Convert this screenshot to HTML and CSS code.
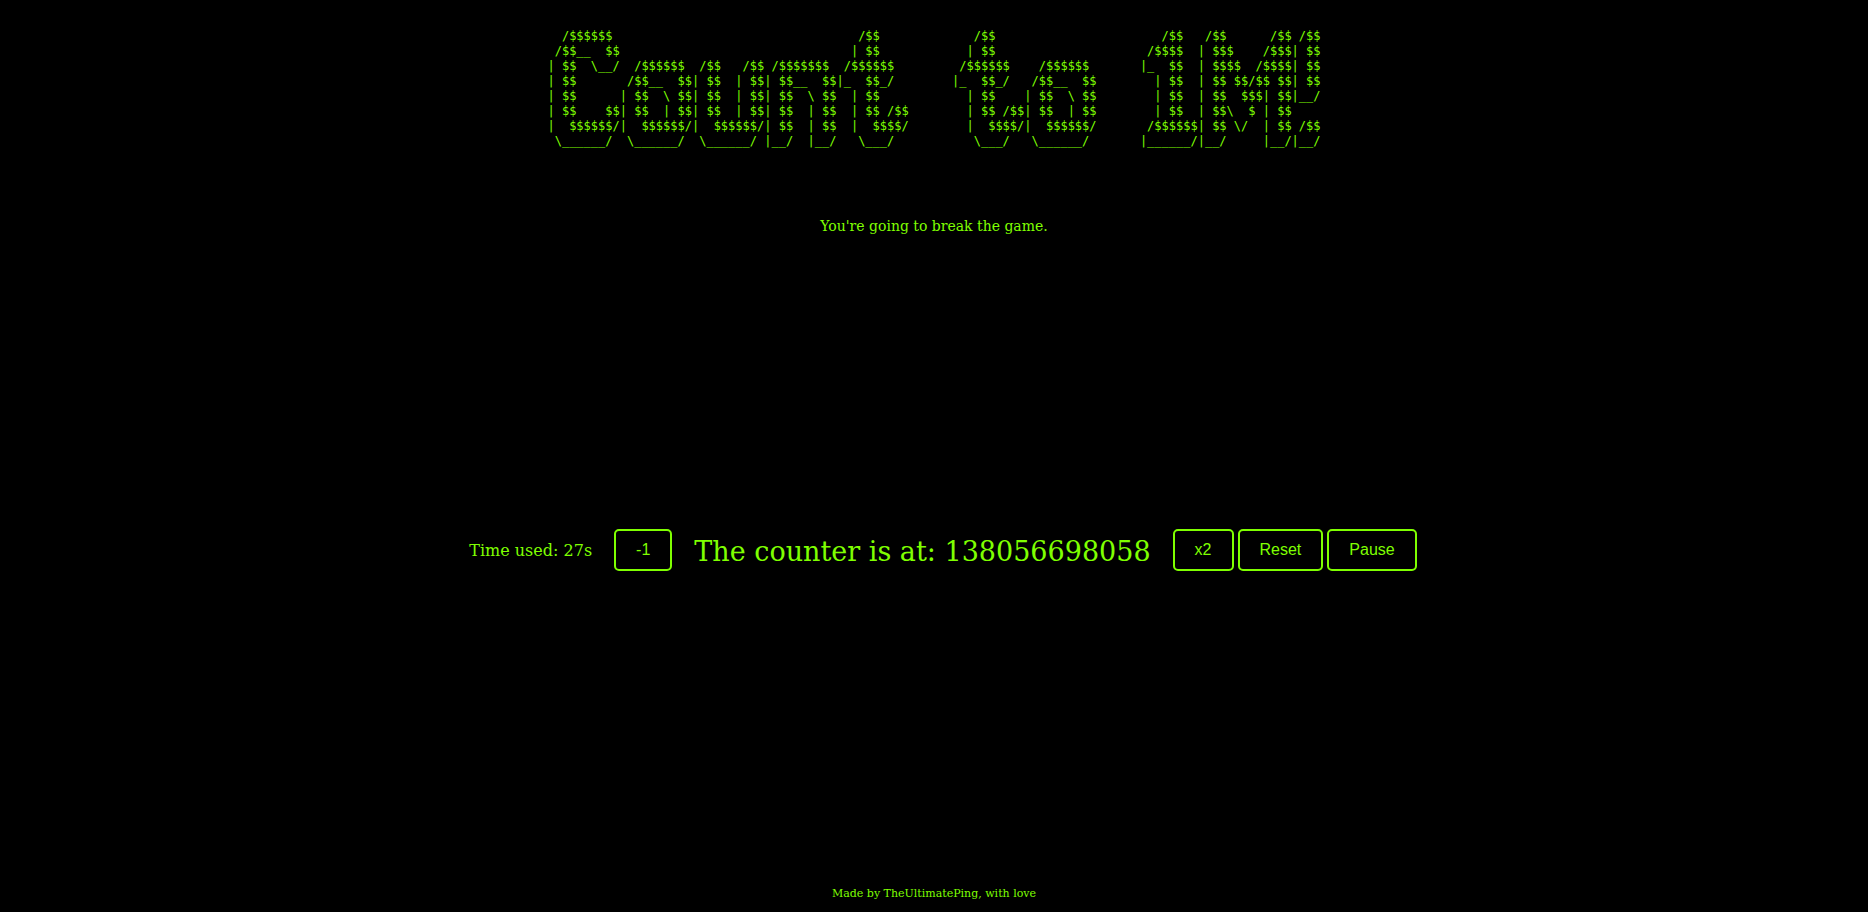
FILE: index.html
```html
<!DOCTYPE html>
<html lang="en">
  <head>
    <meta charset="UTF-8" />
    <meta name="viewport" content="width=device-width, initial-scale=1.0" />
    <title>Count to 1M!</title>
    <link rel="stylesheet" href="styles.css">
  </head>
  <body>
    <header>
      <pre class="title">
  /$$$$$$                                  /$$             /$$                       /$$   /$$      /$$ /$$
 /$$__  $$                                | $$            | $$                     /$$$$  | $$$    /$$$| $$
| $$  \__/  /$$$$$$  /$$   /$$ /$$$$$$$  /$$$$$$         /$$$$$$    /$$$$$$       |_  $$  | $$$$  /$$$$| $$
| $$       /$$__  $$| $$  | $$| $$__  $$|_  $$_/        |_  $$_/   /$$__  $$        | $$  | $$ $$/$$ $$| $$
| $$      | $$  \ $$| $$  | $$| $$  \ $$  | $$            | $$    | $$  \ $$        | $$  | $$  $$$| $$|__/
| $$    $$| $$  | $$| $$  | $$| $$  | $$  | $$ /$$        | $$ /$$| $$  | $$        | $$  | $$\  $ | $$    
|  $$$$$$/|  $$$$$$/|  $$$$$$/| $$  | $$  |  $$$$/        |  $$$$/|  $$$$$$/       /$$$$$$| $$ \/  | $$ /$$
 \______/  \______/  \______/ |__/  |__/   \___/           \___/   \______/       |______/|__/     |__/|__/
</pre>
      <p class="message">You're going to break the game.</p>
    </header>

    <main class="game">
      <span class="time">Time used: <span id="time">27</span>s</span>
      <button type="button" id="minus">-1</button>
      <span class="counter">The counter is at: <span id="count">138056698058</span></span>
      <div class="actions">
        <button type="button" id="double">x2</button>
        <button type="button" id="reset">Reset</button>
        <button type="button" id="pause">Pause</button>
      </div>
    </main>

    <footer>Made by TheUltimatePing, with love</footer>
  </body>
</html>
```
FILE: styles.css
```css
* {
  box-sizing: border-box;
}
body {
  display: grid;
  grid-template-rows: 3fr auto 2fr;
  min-height: 100vh;
  margin: 0;
  background-color: #000;
  color: #7fff00;
  font-family: "DejaVu Serif", serif;
  text-align: center;
}
header {
  padding-top: 29px;
}
.title {
  display: inline-block;
  margin: 0;
  font-family: "DejaVu Sans Mono", monospace;
  font-size: 12px;
  line-height: 15px;
  text-align: left;
}
.message {
  margin: 67px 0 0;
  font-size: 14px;
  line-height: 20px;
}
.game {
  display: flex;
  justify-content: center;
  align-items: center;
  margin-top: 18px;
  padding: 0 12px 0 30px;
}
.time {
  margin-right: 22px;
  font-size: 16px;
}
.counter {
  margin: 0 22px;
  padding-top: 2px;
  font-size: 27px;
}
.actions {
  display: flex;
  gap: 4px;
}
button {
  padding: 10px 20px;
  border: 2px solid #7fff00;
  border-radius: 5px;
  background-color: #000;
  color: #7fff00;
  font-family: "Liberation Sans", Arial, sans-serif;
  font-size: 16px;
  line-height: 18px;
  cursor: pointer;
}
button:hover {
  background-color: #7fff00;
  color: #000;
}
footer {
  align-self: end;
  padding-bottom: 9px;
  font-size: 11px;
  line-height: 18px;
}
```
